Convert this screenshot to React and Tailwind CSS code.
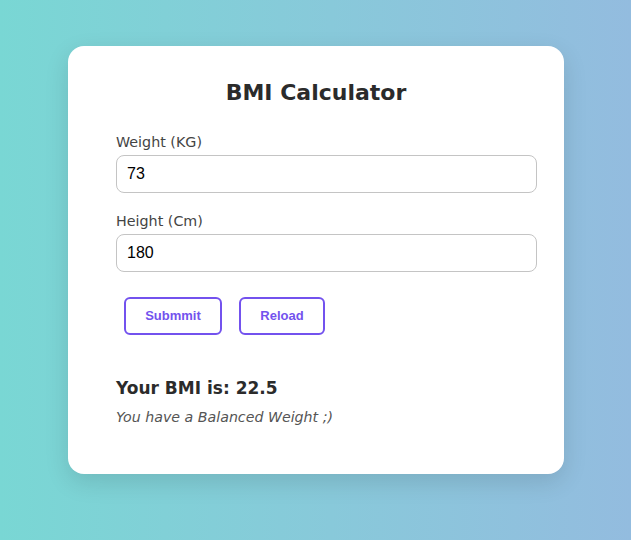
import { useState } from 'react';

function App() {
  const [weight, setWeight] = useState('73');
  const [height, setHeight] = useState('180');

  const bmi = (weight / ((height / 100) * (height / 100))).toFixed(1);

  return (
    <div className="min-h-[540px] w-full bg-gradient-to-r from-[#79d7d4] to-[#93bcdf] pt-[46px] font-['DejaVu_Sans',sans-serif] text-[#2b2b2b]">
      <div className="ml-[68px] h-[428px] w-[496px] rounded-2xl bg-white pt-[31px] shadow-[0_8px_24px_rgba(0,0,0,0.12)]">
        <h1 className="text-center text-[22px] font-bold leading-8">BMI Calculator</h1>

        <div className="pl-12 pr-[27px]">
          <div className="mt-[23px]">
            <label className="block text-[14.3px] leading-5 text-[#444]">Weight (KG)</label>
            <input
              value={weight}
              onChange={(e) => setWeight(e.target.value)}
              className="mt-[3px] h-[38px] w-full rounded-lg border border-[#c4c4c4] px-[10px] font-['Liberation_Sans',sans-serif] text-base text-black outline-none"
            />
          </div>

          <div className="mt-[18px]">
            <label className="block text-[14.3px] leading-5 text-[#444]">Height (Cm)</label>
            <input
              value={height}
              onChange={(e) => setHeight(e.target.value)}
              className="mt-[3px] h-[38px] w-full rounded-lg border border-[#c4c4c4] px-[10px] font-['Liberation_Sans',sans-serif] text-base text-black outline-none"
            />
          </div>

          <div className="mt-[25px] flex gap-[17px] pl-2">
            <button className="h-[38px] w-[98px] rounded-md border-2 border-[#7352ee] font-['Liberation_Sans',sans-serif] text-[13px] font-bold text-[#7352ee]">
              Submmit
            </button>
            <button className="h-[38px] w-[86px] rounded-md border-2 border-[#7352ee] font-['Liberation_Sans',sans-serif] text-[13px] font-bold text-[#7352ee]">
              Reload
            </button>
          </div>

          <div className="mt-[41px]">
            <h2 className="text-[17px] font-bold leading-6">Your BMI is: {bmi}</h2>
            <p className="mt-[7px] text-[14.2px] italic leading-5 text-[#555]">You have a Balanced Weight ;)</p>
          </div>
        </div>
      </div>
    </div>
  );
}

export default App;
